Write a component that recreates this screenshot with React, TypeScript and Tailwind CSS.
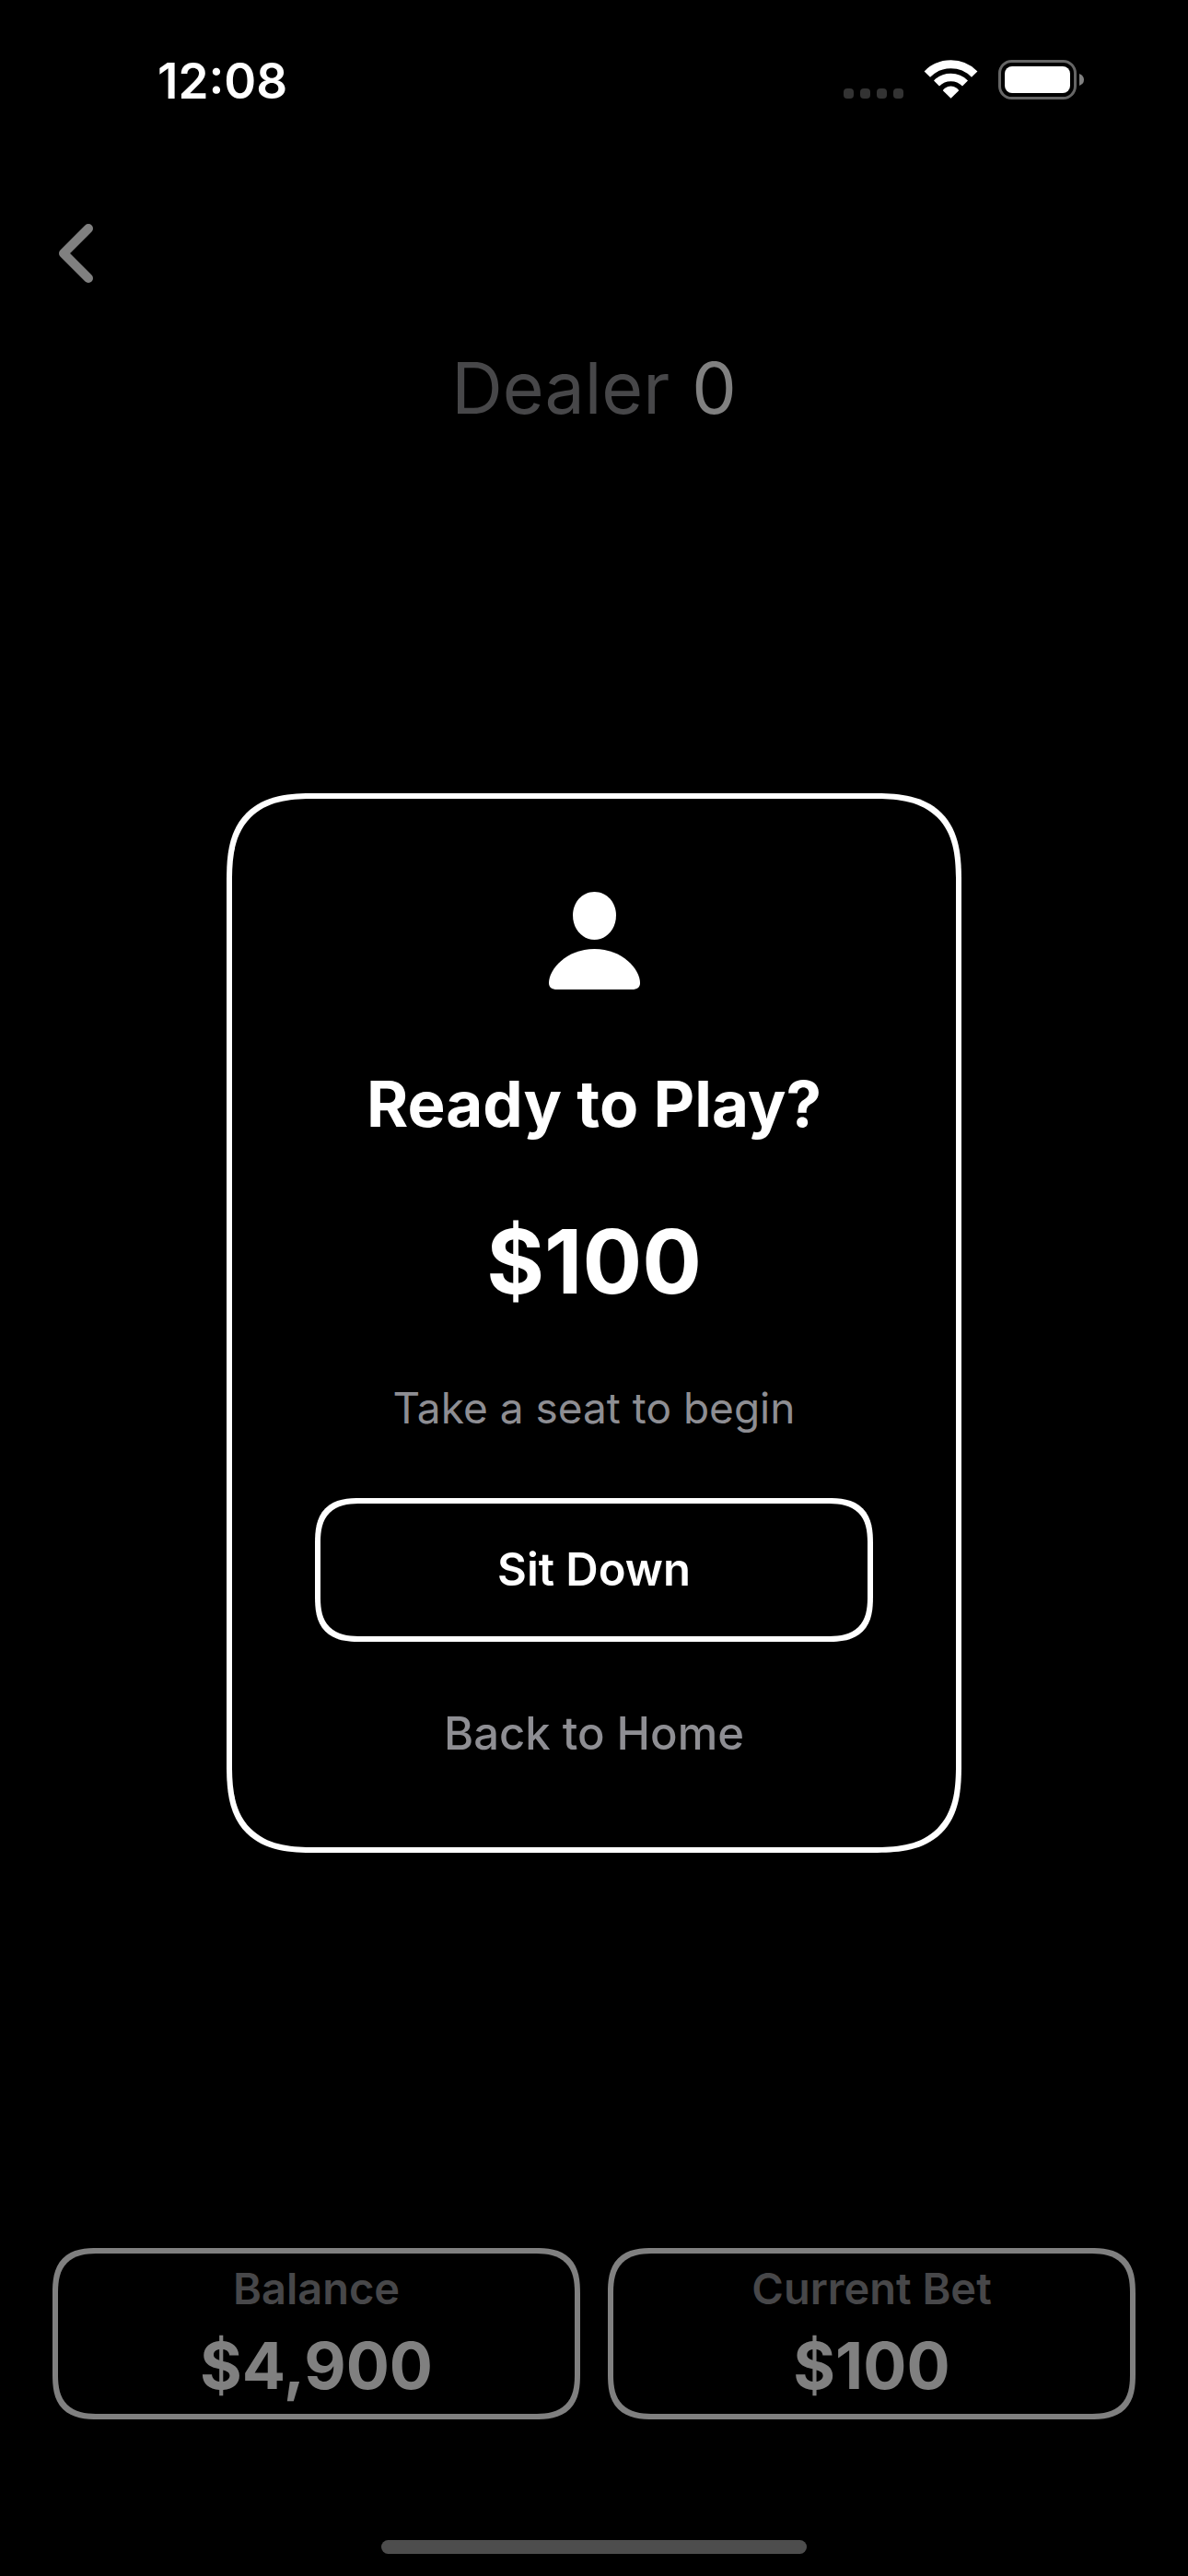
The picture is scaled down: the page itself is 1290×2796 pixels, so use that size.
import React from "react";

const squircleLg =
  "rounded-[75px] supports-[corner-shape:squircle]:rounded-[96px] supports-[corner-shape:squircle]:[corner-shape:superellipse(1.45)]";
const squircleSm =
  "rounded-[39px] supports-[corner-shape:squircle]:rounded-[50px] supports-[corner-shape:squircle]:[corner-shape:superellipse(1.45)]";

function StatusBar() {
  return (
    <header className="flex h-[177px] items-start justify-between pt-[56px] pr-[112px] pl-[171px]">
      <time className="text-[53px] leading-[64px] font-semibold text-white">12:08</time>
      <div className="flex h-[60px] items-center">
        <svg width="262" height="44" viewBox="0 0 262 44" role="img" aria-label="No signal, Wi-Fi on, battery full">
          <g fill="#333333">
            <rect x="0" y="32" width="11" height="11" rx="4" />
            <rect x="18" y="32" width="11" height="11" rx="4" />
            <rect x="36" y="32" width="11" height="11" rx="4" />
            <rect x="54" y="32" width="11" height="11" rx="4" />
          </g>
          <g fill="none" stroke="#ffffff">
            <path d="M90.8 16.6 A36 36 0 0 1 142.2 16.6" strokeWidth="9" />
            <path d="M101 26.4 A22 22 0 0 1 132 26.4" strokeWidth="8.5" />
          </g>
          <path d="M116.5 42.8 L107.8 34.2 Q108.3 33 110 31.7 A12 12 0 0 1 123 31.7 Q124.7 33 125.2 34.2 Z" fill="#ffffff" />
          <rect x="169.5" y="2.5" width="82" height="40" rx="13" fill="none" stroke="#666666" strokeWidth="3" />
          <rect x="175" y="8" width="71" height="29" rx="8" fill="#ffffff" />
          <path d="M256 16 Q261 18 261 22.5 Q261 27 256 29 Z" fill="#808080" />
        </svg>
      </div>
    </header>
  );
}

function Stat({ label, value }: { label: string; value: string }) {
  return (
    <div className={`${squircleSm} flex flex-1 flex-col items-center border-[6px] border-[#808080] pt-[8px] pb-[10px]`}>
      <dt className="text-[47px] leading-[60px] font-semibold text-[#474749]">{label}</dt>
      <dd className="mt-[12px] text-[70px] leading-[84px] font-bold text-[#808080]">{value}</dd>
    </div>
  );
}

function SeatDialog() {
  return (
    <div className="absolute inset-0 flex items-center justify-center">
      <section
        role="dialog"
        aria-labelledby="seat-title"
        className={`${squircleLg} flex w-[798px] max-w-full flex-col items-center border-[6px] border-white bg-black px-[90px] pt-[101px] pb-[93px]`}
      >
        <svg width="99" height="106" viewBox="0 0 99 106" fill="#ffffff" aria-hidden="true">
          <path d="M49.5 0 C62.5 0 73 11 73 25.5 C73 40.5 62.5 52 49.5 52 C36.5 52 26 40.5 26 25.5 C26 11 36.5 0 49.5 0 Z" />
          <path d="M49.5 62 C80 62 99 84 99 99 C99 103.5 96 106 90 106 H9 C3 106 0 103.5 0 99 C0 84 19 62 49.5 62 Z" />
        </svg>
        <h1 id="seat-title" className="mt-[82px] text-[69px] leading-[84px] font-bold text-white">
          Ready to Play?
        </h1>
        <p className="mt-[75px] text-[96px] leading-[108px] font-bold text-white">$100</p>
        <p className="mt-[75px] text-[46px] leading-[60px] text-[#8e8e93]">Take a seat to begin</p>
        <button
          type="button"
          className={`${squircleSm} mt-[68px] h-[156px] w-full border-[6px] border-white text-[49px] leading-[60px] font-semibold text-white`}
        >
          Sit Down
        </button>
        <button type="button" className="mt-[70px] text-[49px] leading-[60px] font-medium text-[#8e8e93]">
          Back to Home
        </button>
      </section>
    </div>
  );
}

export default function App() {
  return (
    <div className="flex min-h-screen flex-col bg-black font-['Inter',sans-serif]">
      <StatusBar />
      <main className="relative flex flex-1 flex-col px-[57px] pb-[68px]">
        <button type="button" aria-label="Back" className="mt-[66px] flex w-[52px] pl-[7px]">
          <svg width="38" height="64" viewBox="0 0 38 64" fill="none" stroke="#808080" strokeWidth="10" strokeLinecap="round" strokeLinejoin="round">
            <path d="M32 5 L5 32 L32 59" />
          </svg>
        </button>
        <h2 className="mt-[64px] flex justify-center gap-[24px] text-[77px] leading-[100px] text-[#474749]">
          Dealer <span className="text-[#808080]">0</span>
        </h2>
        <dl className="mt-auto flex gap-[30px]">
          <Stat label="Balance" value="$4,900" />
          <Stat label="Current Bet" value="$100" />
        </dl>
        <SeatDialog />
      </main>
      <footer className="flex h-[102px] items-end justify-center pb-[24px]">
        <div className="h-[15px] w-[462px] rounded-full bg-[#4d4d4d]" />
      </footer>
    </div>
  );
}
